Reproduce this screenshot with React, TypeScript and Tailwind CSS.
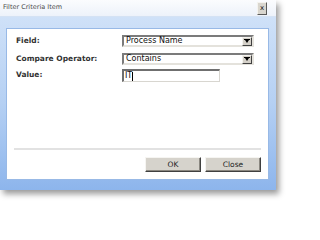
import React from 'react';

const sans = { fontFamily: '"DejaVu Sans", Verdana, sans-serif' };

function DropArrow() {
  return (
    <div className="w-[10px] h-[9px] bg-[#d4d0c8] border border-t-[#f4f3ef] border-l-[#f4f3ef] border-b-[#404040] border-r-[#404040] flex items-center justify-center">
      <svg width="6" height="4" viewBox="0 0 6 4">
        <rect x="0" y="0" width="6" height="1" fill="#000" />
        <polygon points="1,1 5,1 3,4" fill="#000" />
      </svg>
    </div>
  );
}

function Select({ value }: { value: string }) {
  return (
    <div className="w-[132px] h-[12px] flex items-center justify-between bg-white border-2 border-t-[#7b7b7b] border-l-[#7b7b7b] border-b-[#e4e2dc] border-r-[#e4e2dc] pl-[2px] pr-[0px]">
      <span className="text-[8px] leading-none text-[#111]">{value}</span>
      <DropArrow />
    </div>
  );
}

function WinButton({ label }: { label: string }) {
  return (
    <button className="w-[56px] h-[15px] bg-[#d6d3cc] border border-t-[#f6f5f2] border-l-[#f6f5f2] border-b-[#404040] border-r-[#404040] shadow-[inset_-1px_-1px_0_#8a8780] text-[7.5px] leading-none text-[#222] flex items-center justify-center">
      {label}
    </button>
  );
}

export default function App() {
  return (
    <div className="w-[287px] h-[202px] bg-white" style={sans}>
      <div className="w-[276px] h-[190px] flex flex-col shadow-[3px_4px_6px_rgba(0,0,0,0.4)]">
        {/* Title bar */}
        <div className="h-[17px] flex items-center justify-between pl-[3px] pr-[9px] bg-gradient-to-b from-[#fbfcfe] to-[#edf2fa] border-b border-[#d4e2f4]">
          <span className="text-[6.5px] text-[#4a4a4a]">Filter Criteria Item</span>
          <div className="w-[10px] h-[13px] bg-[#d9d6cf] border border-t-[#f4f3ef] border-l-[#f4f3ef] border-b-[#5a5a5a] border-r-[#5a5a5a] flex items-center justify-center text-[7px] leading-none text-[#111]">
            x
          </div>
        </div>

        {/* Frame */}
        <div className="flex-1 flex flex-col pt-[11px] pl-[6px] pr-[7px] pb-[10px] bg-gradient-to-b from-[#cfe1f8] via-[#b5d0f3] to-[#8db5ec]">
          <div className="flex-1 flex flex-col bg-white border border-[#98b9e6]">
            {/* Form */}
            <div className="flex flex-col pt-[6px] pl-[9px]">
              <div className="flex items-center h-[12px]">
                <span className="w-[106px] text-[7.5px] font-bold text-[#333]">Field:</span>
                <Select value="Process Name" />
              </div>
              <div className="flex items-center h-[12px] mt-[6px]">
                <span className="w-[106px] text-[7.5px] font-bold text-[#333]">Compare Operator:</span>
                <Select value="Contains" />
              </div>
              <div className="flex items-start mt-[4px]">
                <span className="w-[106px] text-[7.5px] font-bold text-[#333] leading-[12px]">Value:</span>
                <div className="w-[98px] h-[13px] flex items-center bg-white border border-t-2 border-l-2 border-t-[#6f6f6f] border-l-[#6f6f6f] border-b-[#d8d6d0] border-r-[#d8d6d0] pl-[1px]">
                  <span className="text-[8px] leading-none text-[#111]">IT</span>
                  <span className="w-px h-[9px] bg-black" />
                </div>
              </div>
            </div>

            <div className="flex-1" />

            {/* Separator */}
            <div className="ml-[7px] mr-[7px] h-[2px] bg-[#e2e2e2]" />

            {/* Buttons */}
            <div className="flex justify-end gap-[4px] mt-[7px] mr-[7px] mb-[7px]">
              <WinButton label="OK" />
              <WinButton label="Close" />
            </div>
          </div>
        </div>
      </div>
    </div>
  );
}
